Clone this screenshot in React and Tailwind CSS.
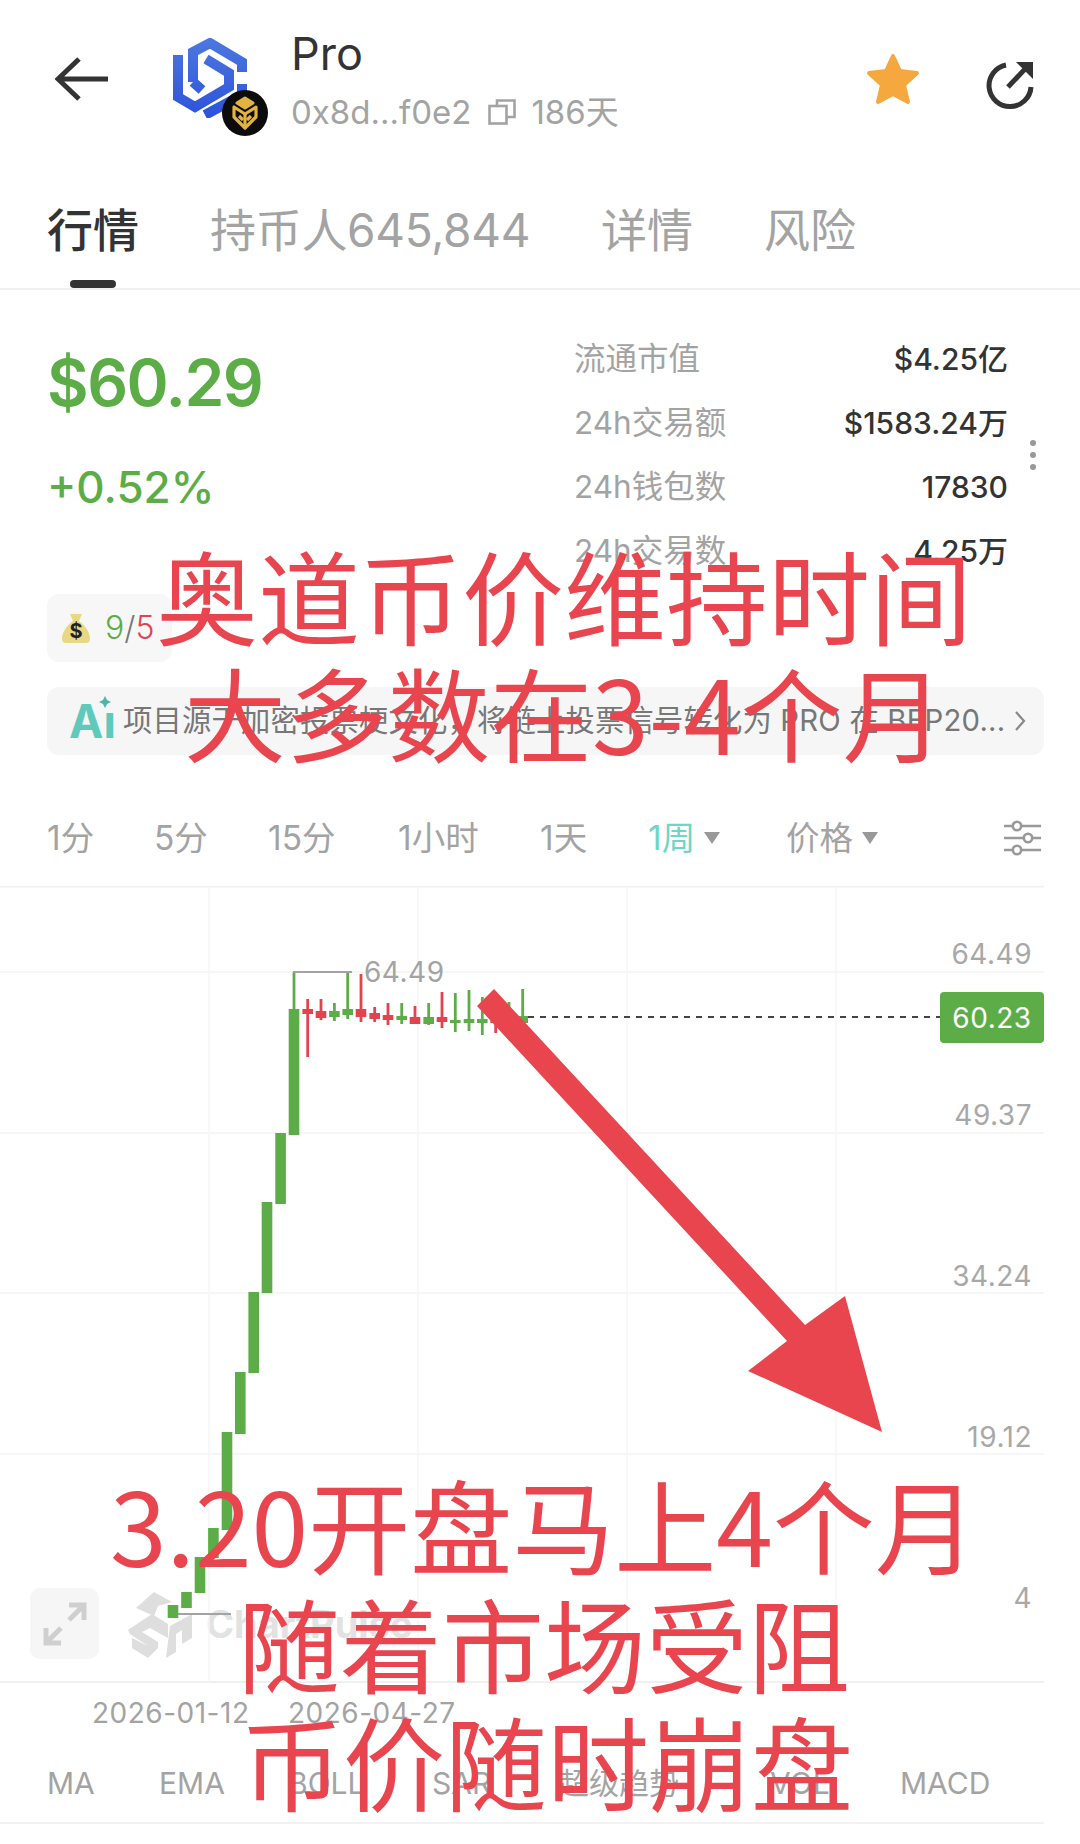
import React from "react";

const GREEN = "#5cad48";
const RED = "#e2434f";

const bigCandles = [
  [173, 1605, 1618], [186.5, 1592, 1608], [200, 1557, 1593], [213.4, 1528, 1558],
  [227, 1432, 1530], [240.3, 1372, 1434], [253.7, 1292, 1373], [267, 1202, 1293],
  [280.6, 1133, 1204], [294, 1009, 1135],
];

const smallCandles = [
  [307.7, "r", 999, 1057, 1009, 1014],
  [321, "r", 999, 1020, 1011, 1018],
  [334.4, "g", 1003, 1021, 1011, 1017],
  [347.7, "g", 973, 1019, 1009, 1015],
  [361, "r", 974, 1022, 1009, 1017],
  [374.7, "r", 1007, 1022, 1013, 1019],
  [388, "r", 1003, 1025, 1015, 1020],
  [401.7, "g", 1003, 1024, 1016, 1020],
  [415, "r", 1006, 1024, 1017, 1024],
  [428.7, "g", 1003, 1025, 1017, 1024],
  [442, "r", 992, 1028, 1017, 1022],
  [455.3, "g", 993, 1032, 1020, 1023],
  [469, "g", 990, 1031, 1019, 1023],
  [482.3, "g", 997, 1035, 1019, 1023],
  [495.7, "r", 1000, 1033, 1018, 1023],
  [509, "g", 1002, 1030, 1017, 1022],
  [522.7, "g", 989, 1023, 1016, 1023],
];

function ProLogo() {
  return (
    <div className="relative w-[74px] h-[80px]">
      <svg width="74" height="80" viewBox="0 0 74 80" fill="none">
        <defs>
          <linearGradient id="pl" gradientUnits="userSpaceOnUse" x1="0" y1="0" x2="0" y2="80">
            <stop offset="0" stopColor="#4d78e0" />
            <stop offset="1" stopColor="#2b52da" />
          </linearGradient>
        </defs>
        <g stroke="url(#pl)" strokeWidth="10" strokeLinejoin="miter">
          <path d="M5 17 V59 L22 69 L56 49 V35 L33 21" />
          <path d="M20 44 V14 L37 5 L69 24 V34" />
          <path d="M20 44 L29 52" />
          <path d="M69 46 V57 L32 77" />
        </g>
      </svg>
    </div>
  );
}

function BnbBadge() {
  return (
    <svg width="46" height="46" viewBox="0 0 46 46" className="absolute left-[49px] top-[52px]">
      <circle cx="23" cy="23" r="23" fill="#0c0c0c" />
      <g fill="none" stroke="#e3b341" strokeWidth="3.2" strokeLinejoin="round">
        <path d="M23 8 L31 13 L23 18 L15 13 Z" fill="#e3b341" />
        <path d="M12 17 L12 27 L23 38 L34 27 L34 17 L23 24 Z" />
        <path d="M23 24 L23 38" />
        <path d="M17 26 L21 30 M29 26 L25 30" />
      </g>
    </svg>
  );
}

function Caret({ color = "#999" }) {
  return (
    <svg width="16" height="12" viewBox="0 0 16 12" className="ml-[9px]">
      <path d="M0 0 H16 L8 12 Z" fill={color} />
    </svg>
  );
}

function ChartSvg() {
  const vs = [209, 418, 627, 836];
  const hs = [972, 1133, 1293, 1454];
  return (
    <svg className="absolute left-0 top-0" width="1044" height="797" viewBox="0 886 1044 797">
      <line x1="0" x2="1044" y1="886.5" y2="886.5" stroke="#f0f0f0" strokeWidth="2" />
      <line x1="0" x2="1044" y1="1682" y2="1682" stroke="#f0f0f0" strokeWidth="2" />
      {hs.map((y) => (
        <line key={y} x1="0" x2="1044" y1={y} y2={y} stroke="#f3f3f3" strokeWidth="1.5" />
      ))}
      {vs.map((x) => (
        <line key={x} x1={x} x2={x} y1="886" y2="1682" stroke="#f6f6f6" strokeWidth="1.5" />
      ))}
      <line x1="294" x2="294" y1="972" y2="1009" stroke={GREEN} strokeWidth="2.8" />
      <line x1="293" x2="352" y1="972" y2="972" stroke="#a3a3a3" strokeWidth="2" />
      <line x1="172" x2="231" y1="1614" y2="1614" stroke="#a3a3a3" strokeWidth="2" />
      <line x1="528" x2="940" y1="1017" y2="1017" stroke="#444" strokeWidth="1.8" strokeDasharray="6 6" />
      {bigCandles.map(([x, a, b]) => (
        <rect key={x} x={x - 5.3} y={a} width="10.6" height={b - a} fill={GREEN} />
      ))}
      {smallCandles.map(([x, c, wt, wb, bt, bb]) => {
        const col = c === "g" ? GREEN : RED;
        return (
          <g key={x}>
            <rect x={x - 1.4} y={wt} width="2.8" height={wb - wt} fill={col} />
            <rect x={x - 5.3} y={bt} width="10.6" height={bb - bt} fill={col} />
          </g>
        );
      })}
    </svg>
  );
}

function Row({ label, value }) {
  return (
    <div className="flex items-center justify-between h-[64px]">
      <span className="text-[31.5px] text-[#a3a3a3]">{label}</span>
      <span className="text-[30px] text-[#333] font-medium">{value}</span>
    </div>
  );
}

export default function App() {
  const axis = [
    ["64.49", 68],
    ["49.37", 229],
    ["34.24", 390],
    ["19.12", 551],
    ["4", 712],
  ];
  const intervals = [
    ["1分", 107], ["5分", 114], ["15分", 130], ["1小时", 142], ["1天", 108],
  ];
  const indicators = [
    ["MA", 112], ["EMA", 129], ["BOLL", 144], ["SAR", 127], ["超级趋势", 211], ["VOL", 130], ["MACD", 120],
  ];
  return (
    <div
      className="relative w-[1080px] h-[1844px] overflow-hidden bg-white"
      style={{ fontFamily: 'Inter,"Noto Sans CJK SC",sans-serif' }}
    >
      {/* header */}
      <header className="flex h-[160px] items-start">
        <svg width="54" height="44" viewBox="0 0 54 44" className="ml-[55px] mt-[57px]" fill="none">
          <path d="M24 2 L3 22 L24 42 M3 22 H53" stroke="#333" strokeWidth="5" />
        </svg>
        <div className="relative ml-[64px] mt-[38px]">
          <ProLogo />
          <BnbBadge />
        </div>
        <div className="ml-[44px] mt-[28px]">
          <div className="text-[45px] leading-[52px] text-[#333]">Pro</div>
          <div className="mt-[10px] flex items-center text-[33px] leading-[44px] text-[#a3a3a3]">
            <span>0x8d...f0e2</span>
            <svg width="28" height="26" viewBox="0 0 28 26" fill="none" className="ml-[17px]" stroke="#a3a3a3" strokeWidth="2.6">
              <rect x="1.5" y="7" width="17" height="17.5" />
              <path d="M9 7 V1.5 H26.5 V18 H18.5" />
            </svg>
            <span className="ml-[15px]">186天</span>
          </div>
        </div>
        <svg width="56" height="54" viewBox="0 0 56 54" className="absolute left-[865px] top-[52px]">
          <path
            d="M28 4 L35 19 L52 21 L39 33 L43 50 L28 42 L13 50 L17 33 L4 21 L21 19 Z"
            fill="#f5a83e"
            stroke="#f5a83e"
            strokeWidth="4"
            strokeLinejoin="round"
          />
        </svg>
        <svg width="50" height="50" viewBox="0 0 50 50" fill="none" className="absolute left-[985px] top-[60px]">
          <path d="M21 5 A21 21 0 1 0 46 27" stroke="#333" strokeWidth="5" />
          <path d="M23 27 L40 9" stroke="#333" strokeWidth="5" />
          <path d="M31 2 H48 V19 Z" fill="#333" />
        </svg>
      </header>

      {/* tabs */}
      <nav className="flex h-[130px] items-start gap-[71px] border-b-2 border-[#f0f0f0] pl-[47px] pt-[40px] text-[46px] leading-[60px] text-[#a3a3a3]">
        <div className="flex flex-col items-center text-[#333] font-medium">
          <span>行情</span>
          <span className="mt-[20px] h-[8px] w-[46px] rounded-[4px] bg-[#333]" />
        </div>
        <span className="tracking-[-0.3px]">持币人645,844</span>
        <span>详情</span>
        <span>风险</span>
      </nav>

      {/* stats */}
      <section className="flex pl-[47px] pt-[37px]">
        <div className="w-[527px]">
          <div className="h-[112px] text-[64px] font-semibold leading-[112px] tracking-[-1.5px]" style={{ color: GREEN }}>$60.29</div>
          <div className="h-[96px] text-[44px] font-medium leading-[96px]" style={{ color: GREEN }}>+0.52%</div>
          <div className="mt-[59px] flex h-[68px] w-[125px] items-center rounded-[12px] bg-[#f7f7f7] pl-[15px] text-[32px] font-light">
            <svg width="28" height="30" viewBox="0 0 28 30">
              <path d="M8 1 L20 1 L17 8 C24 13 28 20 28 26 C28 29 26 30 24 30 H4 C2 30 0 29 0 26 C0 20 4 13 11 8 Z" fill="#e9d883" />
              <text x="14" y="25" textAnchor="middle" fontSize="20" fontWeight="700" fill="#222">$</text>
            </svg>
            <span className="ml-[15px]" style={{ color: GREEN }}>9</span>
            <span className="text-[#777]">/</span>
            <span style={{ color: RED }}>5</span>
          </div>
        </div>
        <div className="w-[434px]">
          <Row label="流通市值" value="$4.25亿" />
          <Row label="24h交易额" value="$1583.24万" />
          <Row label="24h钱包数" value="17830" />
          <Row label="24h交易数" value="4.25万" />
        </div>
        <div className="ml-[22px] mt-[113px] flex h-[30px] flex-col justify-between">
          <span className="h-[6px] w-[6px] rounded-full bg-[#999]" />
          <span className="h-[6px] w-[6px] rounded-full bg-[#999]" />
          <span className="h-[6px] w-[6px] rounded-full bg-[#999]" />
        </div>
      </section>

      {/* AI banner */}
      <div className="ml-[47px] mt-[25px] flex h-[68px] w-[997px] items-center rounded-[12px] bg-[#f6f6f6] pl-[22px]">
        <span className="relative w-[54px] text-[46px] font-bold leading-[46px] text-[#5fc9bb]">
          Aı
          <svg width="12" height="12" viewBox="0 0 12 12" className="absolute left-[30px] top-[-2px]">
            <path d="M6 0 L8 4 L12 6 L8 8 L6 12 L4 8 L0 6 L4 4 Z" fill="#4fb5a6" />
          </svg>
        </span>
        <span className="whitespace-nowrap text-[29.3px] tracking-[0.2px] text-[#777]">项目源于加密投票梗文化，将链上投票信号转化为 PRO 在 BEP20...</span>
        <svg width="12" height="22" viewBox="0 0 12 22" fill="none" className="ml-[9px]">
          <path d="M2 2 L10 11 L2 20" stroke="#888" strokeWidth="2.2" />
        </svg>
      </div>

      {/* intervals */}
      <div className="mt-[50px] flex h-[66px] items-center pl-[47px] text-[33.5px] text-[#a3a3a3]">
        {intervals.map(([t, w]) => (
          <span key={t} style={{ width: w }}>{t}</span>
        ))}
        <span className="flex w-[138px] items-center text-[#6fd6c6]">1周<Caret /></span>
        <span className="flex w-[218px] items-center">价格<Caret /></span>
        <svg width="37" height="36" viewBox="0 0 37 36" fill="none" stroke="#999" strokeWidth="2.6">
          <path d="M0 6 H37 M0 18 H37 M0 30 H37" />
          <circle cx="13" cy="6" r="4.2" fill="#fff" />
          <circle cx="24" cy="18" r="4.2" fill="#fff" />
          <circle cx="13" cy="30" r="4.2" fill="#fff" />
        </svg>
      </div>

      {/* chart */}
      <div className="relative mt-[15px] h-[796px] w-[1044px]">
        <div className="absolute left-[128px] top-[706px]">
          <svg width="64" height="66" viewBox="0 0 64 66" fill="#dedede">
            <path d="M0 38 L24 22 L40 32 L40 46 L22 36 L14 40 L30 50 L30 56 L20 66 L4 56 L4 46 L20 54 L2 42 Z" />
            <path d="M8 16 L26 0 L44 10 L30 14 L26 24 Z" />
            <path d="M42 34 L64 22 V46 L54 52 V38 L48 42 V60 L38 66 Z" />
          </svg>
        </div>
        <span className="absolute left-[206px] top-[716px] text-[38px] font-bold leading-[44px] text-[#e2e2e2]">ChartPulse</span>
        <ChartSvg />
        <div className="absolute left-[30px] top-[702px] flex h-[71px] w-[69px] items-center justify-center rounded-[10px] bg-[#f6f6f6]">
          <svg width="44" height="44" viewBox="0 0 44 44" fill="none" stroke="#cfcfcf" strokeWidth="5">
            <path d="M26 3 H41 V18 M41 3 L26 18" />
            <path d="M3 26 V41 H18 M3 41 L18 26" />
          </svg>
        </div>
        <span className="absolute left-[364px] top-[68px] text-[28px] leading-[36px] tracking-[0.5px] text-[#a3a3a3]">64.49</span>
        {axis.map(([t, top]) => (
          <span key={t} className="absolute right-[12px] text-[28px] leading-[36px] tracking-[0.5px] text-[#a8a8a8]" style={{ top: top - 18 }}>
            {t}
          </span>
        ))}
        <span className="absolute left-[940px] top-[106px] flex h-[51px] w-[104px] items-center justify-center rounded-[4px] text-[28px] tracking-[0.5px] text-white" style={{ backgroundColor: GREEN }}>
          60.23
        </span>
      </div>

      {/* dates */}
      <div className="flex h-[62px] items-center pl-[92px] text-[28px] tracking-[0.5px] text-[#a3a3a3]">
        <span className="w-[196px]">2026-01-12</span>
        <span>2026-04-27</span>
      </div>

      {/* indicators */}
      <div className="flex h-[80px] w-[1044px] items-center border-b-2 border-[#f2f2f2] pl-[47px] text-[30px] text-[#a3a3a3]">
        {indicators.map(([t, w]) => (
          <span key={t} style={{ width: w }}>{t}</span>
        ))}
      </div>

      {/* annotation arrow */}
      <svg className="absolute left-0 top-0 pointer-events-none" width="1080" height="1844" viewBox="0 0 1080 1844">
        <path d="M494 989 L805 1325 L845 1296 L882 1432 L748 1371 L787 1341 L477 1006 Z" fill="#e8454f" />
      </svg>

      {/* annotation text */}
      {[
        ["奥道币价维持时间", 156, 594],
        ["大多数在3-4个月", 184, 711],
        ["3.20开盘马上4个月", 110, 1523],
        ["随着市场受阻", 238, 1642],
        ["币价随时崩盘", 241, 1760],
      ].map(([t, left, cy]) => (
        <span
          key={t}
          className="absolute whitespace-nowrap text-[102px] leading-[120px] text-[#e8454f]"
          style={{ left, top: cy - 60, fontFamily: '"Noto Sans CJK SC",sans-serif' }}
        >
          {t}
        </span>
      ))}
    </div>
  );
}
